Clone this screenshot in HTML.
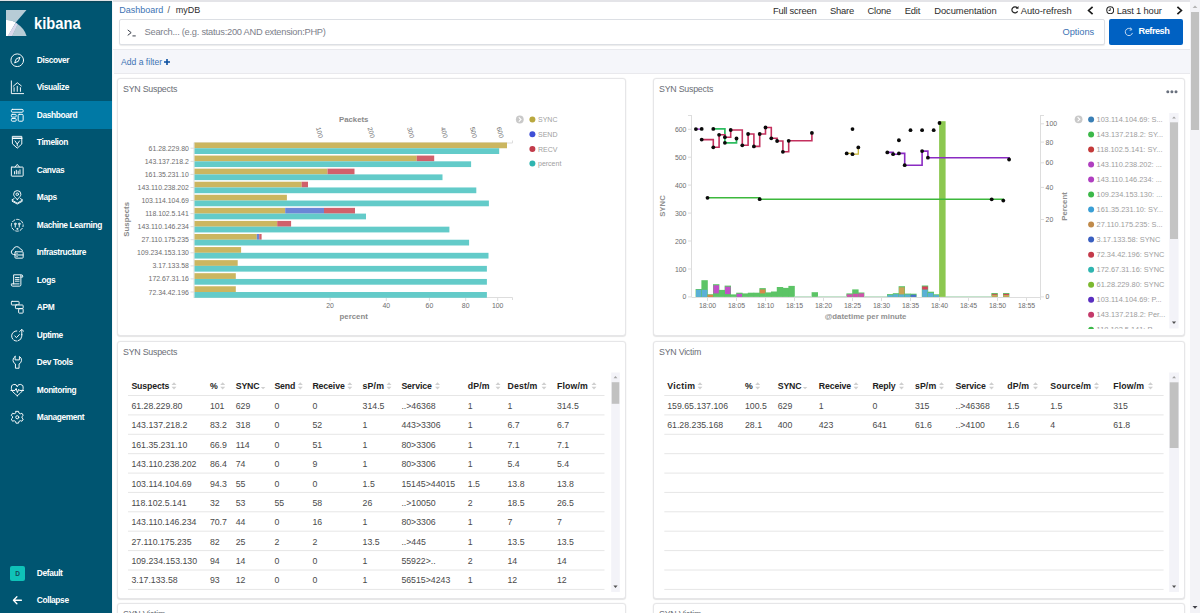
<!DOCTYPE html>
<html>
<head>
<meta charset="utf-8">
<title>Kibana</title>
<style>
*{box-sizing:border-box;margin:0;padding:0}
html,body{width:1200px;height:613px;overflow:hidden;background:#f5f7fa;font-family:"Liberation Sans",sans-serif;color:#2d2d2d}
body{position:relative}
.abs{position:absolute}
/* sidebar */
#side{position:absolute;left:0;top:0;width:112px;height:613px;background:#005571;overflow:hidden}
#sidetop{position:absolute;left:0;top:0;width:112px;height:3px;background:linear-gradient(#dfe3e6 0,#dfe3e6 1px,#0a4559 1px,#03506a 3px)}
#logo{position:absolute;left:6px;top:9.9px;width:20.7px;height:26.1px}
#brand{position:absolute;left:34px;top:13.4px;color:#fff;font-size:16.2px;font-weight:bold;white-space:nowrap;line-height:20px}
#brand span{display:inline-block;transform:scaleX(0.91);transform-origin:0 0}
#side .item{position:absolute;left:0;width:112px;height:27.5px;color:#fff;font-size:8.4px;font-weight:bold;letter-spacing:-0.38px}
#side .item span{position:absolute;left:36.8px;top:8.6px;line-height:10px;white-space:nowrap}
#side .item svg{position:absolute;left:9.5px;top:6.5px;width:14.5px;height:14.5px;fill:none;stroke:#fff;stroke-width:1.05;stroke-linecap:round;stroke-linejoin:round}
#side .item.on{background:#0079a5}
#badge{position:absolute;left:10px;top:6.9px;width:15px;height:15px;border-radius:2px;background:#0fc2b8;color:#114a5a;font-size:6.5px;font-weight:bold;text-align:center;line-height:15px;letter-spacing:0}
/* top */
#topline{position:absolute;left:113px;top:0;width:1077px;height:2px;background:#e4e4e8}
#main{position:absolute;left:113px;top:0;width:1077px;height:613px;background:#fff}
#hdr{position:absolute;left:0;top:2px;width:1077px;height:48px;background:#fff;border-bottom:1px solid #e9eaee}
.nav{position:absolute;top:3.2px;line-height:11px;letter-spacing:-0.2px;font-size:9.4px;color:#2d2d2d;white-space:nowrap}
#search{position:absolute;left:6px;top:17px;width:986px;height:26px;border:1px solid #dcdfe4;border-radius:2px;background:#fff;box-shadow:0 1px 1px rgba(0,0,0,.08)}
#refresh{position:absolute;left:996px;top:17px;width:74px;height:25.5px;background:#0061c2;border-radius:2px;color:#fff;font-size:9.2px;font-weight:bold}
#filter{position:absolute;left:1px;top:50px;width:1076px;height:24px;background:#f5f6fa;border-bottom:1px solid #e9e9ed}
.panel{position:absolute;background:#fff;border:1px solid #e6e6e8;border-radius:3px;box-shadow:0 1px 1px rgba(0,0,0,.09), 0 0 0 0.5px rgba(0,0,0,.03)}
.ptitle{position:absolute;left:5px;top:4.8px;line-height:11px;font-size:8.8px;letter-spacing:-0.22px;color:#6a6d75;white-space:nowrap}
/* scrollbar */
#sb{position:absolute;left:1190px;top:0;width:10px;height:613px;background:#f3f3f7}
#sb .thumb{position:absolute;left:1px;top:12px;width:8px;height:118px;background:#c1c1c1}
</style>
</head>
<body>
<div id="main">
  <div id="hdr">
    <div class="nav" style="left:6.2px;top:3.4px;color:#3d73b4;font-size:9px;letter-spacing:0">Dashboard</div>
    <div class="nav" style="left:54.5px;top:3.4px;font-size:9px;color:#555">/</div>
    <div class="nav" style="left:62.8px;top:3.4px;font-size:9px;letter-spacing:0">myDB</div>
    <div class="nav" style="left:659.9px">Full screen</div>
    <div class="nav" style="left:717px">Share</div>
    <div class="nav" style="left:754.5px">Clone</div>
    <div class="nav" style="left:791.8px">Edit</div>
    <div class="nav" style="left:821.2px;letter-spacing:-0.05px">Documentation</div>
    <svg class="abs" style="left:898px;top:4px;width:8px;height:8px" viewBox="0 0 16 16"><path d="M13.2 10.5 A6 6 0 1 1 12.5 4" fill="none" stroke="#222" stroke-width="2.4"/><path d="M9.5 5.5 H15 V0 Z" fill="#222"/></svg>
    <div class="nav" style="left:907.7px;letter-spacing:-0.05px">Auto-refresh</div>
    <svg class="abs" style="left:973.5px;top:4px;width:7px;height:9px" viewBox="0 0 7 9"><path d="M5.6 0.8 L1.6 4.5 L5.6 8.2" fill="none" stroke="#1a1a1a" stroke-width="1.7"/></svg>
    <svg class="abs" style="left:993px;top:4px;width:8.4px;height:8.4px" viewBox="0 0 16 16"><circle cx="8" cy="8" r="6.6" fill="none" stroke="#222" stroke-width="2"/><path d="M8 4 V8.5 H5" fill="none" stroke="#222" stroke-width="1.8"/></svg>
    <div class="nav" style="left:1003.7px;letter-spacing:-0.18px">Last 1 hour</div>
    <svg class="abs" style="left:1062.5px;top:4px;width:7px;height:9px" viewBox="0 0 7 9"><path d="M1.4 0.8 L5.4 4.5 L1.4 8.2" fill="none" stroke="#1a1a1a" stroke-width="1.7"/></svg>
    <div id="search">
      <svg class="abs" style="left:6.6px;top:8.8px;width:10px;height:8.2px" viewBox="0 0 11 9"><path d="M0.8 1 L4.6 4 L0.8 7" fill="none" stroke="#3a3f4a" stroke-width="1.1"/><path d="M6 7.6 H9.6" stroke="#3a3f4a" stroke-width="1.1"/></svg>
      <div class="abs" style="left:24.6px;top:6.6px;font-size:9.3px;line-height:11px;color:#7c808a;letter-spacing:-0.26px;white-space:nowrap">Search... (e.g. status:200 AND extension:PHP)</div>
      <div class="abs" style="left:942.5px;top:6.6px;font-size:9.3px;line-height:11px;color:#3d73b4;letter-spacing:-0.05px;white-space:nowrap">Options</div>
    </div>
    <div id="refresh">
      <svg class="abs" style="left:14.5px;top:8px;width:10px;height:10px" viewBox="0 0 16 16"><path d="M13.5 9.5 A5.8 5.8 0 1 1 11.5 3.4" fill="none" stroke="#cfe0f3" stroke-width="1.5"/><path d="M10.5 1 L12.5 4.4 L9 5.2" fill="none" stroke="#cfe0f3" stroke-width="1.4"/></svg>
      <div class="abs" style="left:29.6px;top:7.2px;line-height:11px;letter-spacing:-0.5px">Refresh</div>
    </div>
  </div>
  <div id="filter"><div class="abs" style="left:7px;top:7px;font-size:8.6px;line-height:10px;color:#3d73b4;letter-spacing:0;white-space:nowrap">Add a filter</div><svg class="abs" style="left:49.6px;top:8.6px;width:6px;height:6px" viewBox="0 0 6 6"><path d="M3 0 V6 M0 3 H6" stroke="#0a4fa0" stroke-width="1.6"/></svg></div>
  <div class="panel" id="p1" style="left:4px;top:78px;width:509px;height:258px"><div class="ptitle">SYN Suspects</div></div>
  <div class="panel" id="p2" style="left:540px;top:78px;width:532px;height:258px"><div class="ptitle">SYN Suspects</div></div>
  <div class="panel" id="p3" style="left:4px;top:341px;width:509px;height:258px"><div class="ptitle">SYN Suspects</div></div>
  <div class="panel" id="p4" style="left:540px;top:341px;width:532px;height:258px"><div class="ptitle">SYN Victim</div></div>
  <div class="panel" id="p5" style="left:4px;top:603px;width:509px;height:40px"><div class="ptitle">SYN Victim</div></div>
  <div class="panel" id="p6" style="left:540px;top:603px;width:532px;height:40px"><div class="ptitle">SYN Victim</div></div>
</div>
<svg class="abs" style="left:0;top:0" width="1200" height="613" font-family="Liberation Sans, sans-serif">
<g stroke="#ddd" stroke-width="1" fill="none">
<path d="M194 142.5 V298 M194 143 H512.5 V140.5 M194 297.5 H512.5 V300"/>
<path d="M319.1 143 V146"/>
<path d="M370.7 143 V146"/>
<path d="M410.3 143 V146"/>
<path d="M443.7 143 V146"/>
<path d="M473.1 143 V146"/>
<path d="M499.7 143 V146"/>
<path d="M330.1 297.5 V301"/>
<path d="M386.3 297.5 V301"/>
<path d="M429.4 297.5 V301"/>
<path d="M465.7 297.5 V301"/>
<path d="M497.7 297.5 V301"/>
<path d="M190.5 148.2 H194"/>
<path d="M190.5 161.3 H194"/>
<path d="M190.5 174.4 H194"/>
<path d="M190.5 187.5 H194"/>
<path d="M190.5 200.5 H194"/>
<path d="M190.5 213.6 H194"/>
<path d="M190.5 226.7 H194"/>
<path d="M190.5 239.7 H194"/>
<path d="M190.5 252.8 H194"/>
<path d="M190.5 265.9 H194"/>
<path d="M190.5 278.9 H194"/>
<path d="M190.5 292.0 H194"/>
</g>
<rect x="194.5" y="142.50" width="312.5" height="5.75" fill="#cbb660"/>
<rect x="194.5" y="148.25" width="304.7" height="5.75" fill="#63cbc9"/>
<rect x="194.5" y="155.57" width="222.2" height="5.75" fill="#cbb660"/>
<rect x="416.7" y="155.57" width="17.5" height="5.75" fill="#d1606b"/>
<rect x="194.5" y="161.32" width="276.6" height="5.75" fill="#63cbc9"/>
<rect x="194.5" y="168.64" width="133.0" height="5.75" fill="#cbb660"/>
<rect x="327.5" y="168.64" width="27.0" height="5.75" fill="#d1606b"/>
<rect x="194.5" y="174.39" width="248.0" height="5.75" fill="#63cbc9"/>
<rect x="194.5" y="181.71" width="107.2" height="5.75" fill="#cbb660"/>
<rect x="301.7" y="181.71" width="6.3" height="5.75" fill="#d1606b"/>
<rect x="194.5" y="187.46" width="281.8" height="5.75" fill="#63cbc9"/>
<rect x="194.5" y="194.78" width="92.4" height="5.75" fill="#cbb660"/>
<rect x="194.5" y="200.53" width="294.4" height="5.75" fill="#63cbc9"/>
<rect x="194.5" y="207.85" width="90.7" height="5.75" fill="#cbb660"/>
<rect x="285.2" y="207.85" width="38.8" height="5.75" fill="#6b86d6"/>
<rect x="324.0" y="207.85" width="31.0" height="5.75" fill="#d1606b"/>
<rect x="194.5" y="213.60" width="171.5" height="5.75" fill="#63cbc9"/>
<rect x="194.5" y="220.92" width="82.7" height="5.75" fill="#cbb660"/>
<rect x="277.2" y="220.92" width="13.9" height="5.75" fill="#d1606b"/>
<rect x="194.5" y="226.67" width="254.9" height="5.75" fill="#63cbc9"/>
<rect x="194.5" y="233.99" width="62.3" height="5.75" fill="#cbb660"/>
<rect x="256.8" y="233.99" width="2.4" height="5.75" fill="#6b86d6"/>
<rect x="259.2" y="233.99" width="2.4" height="5.75" fill="#d1606b"/>
<rect x="194.5" y="239.74" width="274.6" height="5.75" fill="#63cbc9"/>
<rect x="194.5" y="247.06" width="46.6" height="5.75" fill="#cbb660"/>
<rect x="194.5" y="252.81" width="294.0" height="5.75" fill="#63cbc9"/>
<rect x="194.5" y="260.13" width="43.2" height="5.75" fill="#cbb660"/>
<rect x="194.5" y="265.88" width="292.4" height="5.75" fill="#63cbc9"/>
<rect x="194.5" y="273.20" width="41.3" height="5.75" fill="#cbb660"/>
<rect x="194.5" y="278.95" width="292.4" height="5.75" fill="#63cbc9"/>
<rect x="194.5" y="286.27" width="41.3" height="5.75" fill="#cbb660"/>
<rect x="194.5" y="292.02" width="292.4" height="5.75" fill="#63cbc9"/>
<g font-size="6.9" fill="#6d6d6d" text-anchor="end">
<text x="188.8" y="150.8">61.28.229.80</text>
<text x="188.8" y="163.8">143.137.218.2</text>
<text x="188.8" y="176.9">161.35.231.10</text>
<text x="188.8" y="190.0">143.110.238.202</text>
<text x="188.8" y="203.0">103.114.104.69</text>
<text x="188.8" y="216.1">118.102.5.141</text>
<text x="188.8" y="229.2">143.110.146.234</text>
<text x="188.8" y="242.2">27.110.175.235</text>
<text x="188.8" y="255.3">109.234.153.130</text>
<text x="188.8" y="268.4">3.17.133.58</text>
<text x="188.8" y="281.4">172.67.31.16</text>
<text x="188.8" y="294.5">72.34.42.196</text>
</g>
<g font-size="6.9" fill="#6d6d6d" text-anchor="middle">
<text x="330.1" y="308.2">20</text>
<text x="386.3" y="308.2">40</text>
<text x="429.4" y="308.2">60</text>
<text x="465.7" y="308.2">80</text>
<text x="497.7" y="308.2">100</text>
</g>
<g font-size="6.6" fill="#6d6d6d">
<text transform="translate(315.9 127.8) rotate(75)">100</text>
<text transform="translate(367.5 127.8) rotate(75)">200</text>
<text transform="translate(407.1 127.8) rotate(75)">300</text>
<text transform="translate(440.5 127.8) rotate(75)">400</text>
<text transform="translate(469.9 127.8) rotate(75)">500</text>
<text transform="translate(496.5 127.8) rotate(75)">600</text>
</g>
<g font-size="7.8" font-weight="bold" fill="#8a8a8a" text-anchor="middle">
<text x="353.7" y="122">Packets</text>
<text x="353.7" y="319.4">percent</text>
<text transform="translate(129 219.3) rotate(-90)">Suspects</text>
</g>
<circle cx="519.8" cy="119.5" r="3.9" fill="#c9c9c9"/><path d="M518.8 117.4 L521 119.5 L518.8 121.6" stroke="#fff" stroke-width="1.1" fill="none"/>
<circle cx="532.4" cy="119.5" r="3" fill="#b9a83f"/><text x="538" y="122.1" font-size="7" fill="#a0a0a0">SYNC</text>
<circle cx="532.4" cy="134.2" r="3" fill="#3f4fd6"/><text x="538" y="136.8" font-size="7" fill="#a0a0a0">SEND</text>
<circle cx="532.4" cy="148.9" r="3" fill="#c23b4a"/><text x="538" y="151.5" font-size="7" fill="#a0a0a0">RECV</text>
<circle cx="532.4" cy="163.6" r="3" fill="#2fb5b0"/><text x="538" y="166.2" font-size="7" fill="#a0a0a0">percent</text>
</svg>
<svg class="abs" style="left:0;top:0" width="1200" height="613" font-family="Liberation Sans, sans-serif">
<defs><clipPath id="lgclip"><rect x="1070" y="112" width="100" height="217"/></clipPath></defs>
<g stroke="#ddd" stroke-width="1" fill="none">
<path d="M691.5 115 V297 M688 115.5 H691.5 M691.5 297.5 H1040.5 M1040.5 115 V300 M1040.5 115.5 H1044"/>
<path d="M688 296.9 H691.5"/>
<path d="M688 269.0 H691.5"/>
<path d="M688 241.0 H691.5"/>
<path d="M688 213.1 H691.5"/>
<path d="M688 185.1 H691.5"/>
<path d="M688 157.2 H691.5"/>
<path d="M688 129.3 H691.5"/>
<path d="M707.5 297.5 V301"/>
<path d="M736.5 297.5 V301"/>
<path d="M765.5 297.5 V301"/>
<path d="M794.5 297.5 V301"/>
<path d="M823.5 297.5 V301"/>
<path d="M852.5 297.5 V301"/>
<path d="M881.5 297.5 V301"/>
<path d="M910.5 297.5 V301"/>
<path d="M939.5 297.5 V301"/>
<path d="M968.5 297.5 V301"/>
<path d="M997.5 297.5 V301"/>
<path d="M1026.5 297.5 V301"/>
<path d="M1040.5 296.9 H1044"/>
<path d="M1040.5 219.5 H1044"/>
<path d="M1040.5 187.4 H1044"/>
<path d="M1040.5 162.8 H1044"/>
<path d="M1040.5 142.1 H1044"/>
<path d="M1040.5 123.8 H1044"/>
</g>
<rect x="695.6" y="289.0" width="6.4" height="7.9" fill="#5cc466"/>
<rect x="696.00" y="289.8" width="5.60" height="7.1" fill="#5bb0d6"/>
<rect x="701.4" y="280.2" width="6.4" height="16.7" fill="#5cc466"/>
<rect x="701.80" y="289.8" width="5.60" height="7.1" fill="#5bb0d6"/>
<rect x="707.2" y="294.3" width="6.4" height="2.6" fill="#5cc466"/>
<rect x="707.60" y="294.8" width="5.60" height="2.1" fill="#d8884a"/>
<rect x="713.0" y="284.2" width="6.4" height="12.7" fill="#5cc466"/>
<rect x="713.40" y="285.3" width="5.60" height="8.1" fill="#c24fc8"/>
<rect x="718.8" y="289.9" width="6.4" height="7.0" fill="#5cc466"/>
<rect x="724.6" y="285.6" width="6.4" height="11.3" fill="#5cc466"/>
<rect x="725.00" y="286.7" width="5.60" height="7.4" fill="#c24fc8"/>
<rect x="730.4" y="294.4" width="6.4" height="2.5" fill="#5cc466"/>
<rect x="736.2" y="292.7" width="6.4" height="4.2" fill="#5cc466"/>
<rect x="736.60" y="293.8" width="5.60" height="3.1" fill="#c24fc8"/>
<rect x="742.0" y="293.4" width="6.4" height="3.5" fill="#5cc466"/>
<rect x="747.8" y="292.7" width="6.4" height="4.2" fill="#5cc466"/>
<rect x="753.6" y="292.7" width="6.4" height="4.2" fill="#5cc466"/>
<rect x="759.4" y="288.1" width="6.4" height="8.8" fill="#5cc466"/>
<rect x="759.80" y="289.5" width="5.60" height="3.9" fill="#d8884a"/>
<rect x="765.2" y="292.4" width="6.4" height="4.5" fill="#5cc466"/>
<rect x="771.0" y="291.5" width="6.4" height="5.4" fill="#5cc466"/>
<rect x="776.8" y="287.0" width="6.4" height="9.9" fill="#5cc466"/>
<rect x="782.6" y="287.9" width="6.4" height="9.0" fill="#5cc466"/>
<rect x="788.4" y="285.9" width="6.4" height="11.0" fill="#5cc466"/>
<rect x="811.6" y="292.2" width="6.4" height="4.7" fill="#5cc466"/>
<rect x="846.4" y="293.4" width="6.4" height="3.5" fill="#5cc466"/>
<rect x="846.80" y="294.4" width="5.60" height="2.5" fill="#d052ad"/>
<rect x="852.2" y="289.4" width="6.4" height="7.5" fill="#5cc466"/>
<rect x="852.60" y="293.8" width="5.60" height="3.1" fill="#d052ad"/>
<rect x="858.0" y="292.5" width="6.4" height="4.4" fill="#5cc466"/>
<rect x="858.40" y="293.4" width="5.60" height="3.5" fill="#d052ad"/>
<rect x="887.0" y="294.1" width="6.4" height="2.8" fill="#5cc466"/>
<rect x="887.40" y="295.1" width="5.60" height="1.8" fill="#5bb0d6"/>
<rect x="892.8" y="293.2" width="6.4" height="3.7" fill="#5cc466"/>
<rect x="893.20" y="294.2" width="5.60" height="2.7" fill="#5bb0d6"/>
<rect x="898.6" y="286.2" width="6.4" height="10.7" fill="#5cc466"/>
<rect x="899.00" y="294.3" width="5.60" height="2.6" fill="#5bb0d6"/>
<rect x="899.00" y="287.3" width="5.60" height="7.0" fill="#c9a457"/>
<rect x="904.4" y="293.6" width="6.4" height="3.3" fill="#5cc466"/>
<rect x="904.80" y="294.5" width="5.60" height="2.4" fill="#5bb0d6"/>
<rect x="910.2" y="293.7" width="6.4" height="3.2" fill="#5cc466"/>
<rect x="910.60" y="294.7" width="5.60" height="2.2" fill="#4a6fd0"/>
<rect x="921.8" y="285.5" width="6.4" height="11.4" fill="#5cc466"/>
<rect x="922.20" y="289.5" width="5.60" height="7.4" fill="#5bb0d6"/>
<rect x="922.20" y="286.5" width="5.60" height="3.0" fill="#d8405a"/>
<rect x="927.6" y="291.7" width="6.4" height="5.2" fill="#5cc466"/>
<rect x="928.00" y="292.9" width="5.60" height="4.0" fill="#5bb0d6"/>
<rect x="933.4" y="294.3" width="6.4" height="2.6" fill="#5cc466"/>
<rect x="933.80" y="295.1" width="5.60" height="1.8" fill="#5bb0d6"/>
<rect x="991.4" y="293.0" width="6.4" height="3.9" fill="#5cc466"/>
<rect x="991.80" y="294.7" width="5.60" height="2.2" fill="#c9a457"/>
<rect x="991.80" y="293.9" width="5.60" height="0.8" fill="#d8405a"/>
<rect x="1003.0" y="293.0" width="6.4" height="3.9" fill="#5cc466"/>
<rect x="1003.40" y="294.9" width="5.60" height="2.0" fill="#c9a457"/>
<rect x="1003.40" y="293.9" width="5.60" height="1.0" fill="#d8405a"/>
<path d="M794.5 296.6 H811.9 M817.7 296.6 H846.7 M864.1 296.6 H887.3 M945.3 296.6 H991.7" stroke="#b5dcc0" stroke-width="0.9"/>
<rect x="939.1" y="121.2" width="6.5" height="175.7" fill="#8cc850"/>
<path d="M707.5 197.8 H759.7 V199.2 H991.7 V199.3 H1003.3 V200.6" fill="none" stroke="#3cb83c" stroke-width="1.6"/>
<path d="M713.3 128.9 H724.9 V142.8 H736.5 V138.5" fill="none" stroke="#2ebd60" stroke-width="1.7"/>
<path d="M701.7 139.6 H713.3 V147.3 H719.1 V134.8 H724.9 V137.2 H730.7 V130 H742.3 V145.3 H748.1 V134 H753.9 V146.4 H759.7 V134 H765.5 V127.5 H771.3 V138.3 H777.1 V141 H782.9 V151.8 H788.7 V140.8 H811.9 V132.9" fill="none" stroke="#c4305e" stroke-width="1.6"/>
<path d="M695.9 129.1 H701.7 V128.9" fill="none" stroke="#8a2bc2" stroke-width="1.2"/>
<path d="M846.7 153.4 H852.5 V154.2 H858.3 V147.4" fill="none" stroke="#c9b62e" stroke-width="1.2"/>
<path d="M887.3 152.4 H893.1 V154.2 H898.9 V153.4 H904.7 V165.2 H922.1 V151.1 H927.9 V157.7 H1009.1 V159.5" fill="none" stroke="#8a2bc2" stroke-width="1.6"/>
<circle cx="707.5" cy="197.8" r="1.9" fill="#0a0a0a"/>
<circle cx="759.7" cy="199.2" r="1.9" fill="#0a0a0a"/>
<circle cx="991.7" cy="199.3" r="1.9" fill="#0a0a0a"/>
<circle cx="1003.3" cy="200.6" r="1.9" fill="#0a0a0a"/>
<circle cx="713.3" cy="128.9" r="1.9" fill="#0a0a0a"/>
<circle cx="724.9" cy="142.8" r="1.9" fill="#0a0a0a"/>
<circle cx="736.5" cy="138.5" r="1.9" fill="#0a0a0a"/>
<circle cx="701.7" cy="139.6" r="1.9" fill="#0a0a0a"/>
<circle cx="713.3" cy="147.3" r="1.9" fill="#0a0a0a"/>
<circle cx="719.1" cy="134.8" r="1.9" fill="#0a0a0a"/>
<circle cx="724.9" cy="137.2" r="1.9" fill="#0a0a0a"/>
<circle cx="730.7" cy="130" r="1.9" fill="#0a0a0a"/>
<circle cx="742.3" cy="145.3" r="1.9" fill="#0a0a0a"/>
<circle cx="748.1" cy="134" r="1.9" fill="#0a0a0a"/>
<circle cx="753.9" cy="146.4" r="1.9" fill="#0a0a0a"/>
<circle cx="759.7" cy="134" r="1.9" fill="#0a0a0a"/>
<circle cx="765.5" cy="127.5" r="1.9" fill="#0a0a0a"/>
<circle cx="771.3" cy="138.3" r="1.9" fill="#0a0a0a"/>
<circle cx="777.1" cy="141" r="1.9" fill="#0a0a0a"/>
<circle cx="782.9" cy="151.8" r="1.9" fill="#0a0a0a"/>
<circle cx="788.7" cy="140.8" r="1.9" fill="#0a0a0a"/>
<circle cx="811.9" cy="132.9" r="1.9" fill="#0a0a0a"/>
<circle cx="695.9" cy="129.1" r="1.9" fill="#0a0a0a"/>
<circle cx="701.7" cy="128.9" r="1.9" fill="#0a0a0a"/>
<circle cx="846.7" cy="153.4" r="1.9" fill="#0a0a0a"/>
<circle cx="852.5" cy="154.2" r="1.9" fill="#0a0a0a"/>
<circle cx="858.3" cy="147.4" r="1.9" fill="#0a0a0a"/>
<circle cx="887.3" cy="152.4" r="1.9" fill="#0a0a0a"/>
<circle cx="893.1" cy="154.2" r="1.9" fill="#0a0a0a"/>
<circle cx="898.9" cy="153.4" r="1.9" fill="#0a0a0a"/>
<circle cx="904.7" cy="165.2" r="1.9" fill="#0a0a0a"/>
<circle cx="922.1" cy="151.1" r="1.9" fill="#0a0a0a"/>
<circle cx="927.9" cy="157.7" r="1.9" fill="#0a0a0a"/>
<circle cx="1009.1" cy="159.5" r="1.9" fill="#0a0a0a"/>
<circle cx="852.5" cy="129.1" r="1.9" fill="#0a0a0a"/>
<circle cx="898.9" cy="140.25" r="1.9" fill="#0a0a0a"/>
<circle cx="910.5" cy="130.2" r="1.9" fill="#0a0a0a"/>
<circle cx="922.1" cy="130.2" r="1.9" fill="#0a0a0a"/>
<circle cx="933.7" cy="130.2" r="1.9" fill="#0a0a0a"/>
<circle cx="939.5" cy="123" r="1.9" fill="#0a0a0a"/>
<g font-size="6.9" fill="#6d6d6d" text-anchor="end">
<text x="686.4" y="299.4">0</text>
<text x="686.4" y="271.5">100</text>
<text x="686.4" y="243.5">200</text>
<text x="686.4" y="215.6">300</text>
<text x="686.4" y="187.6">400</text>
<text x="686.4" y="159.7">500</text>
<text x="686.4" y="131.8">600</text>
</g>
<g font-size="6.9" fill="#6d6d6d" text-anchor="start">
<text x="1045.6" y="299.4">0</text>
<text x="1045.6" y="222.0">20</text>
<text x="1045.6" y="189.9">40</text>
<text x="1045.6" y="165.3">60</text>
<text x="1045.6" y="144.6">80</text>
<text x="1045.6" y="126.3">100</text>
</g>
<g font-size="6.9" fill="#6d6d6d" text-anchor="middle">
<text x="707.5" y="308">18:00</text>
<text x="736.5" y="308">18:05</text>
<text x="765.5" y="308">18:10</text>
<text x="794.5" y="308">18:15</text>
<text x="823.5" y="308">18:20</text>
<text x="852.5" y="308">18:25</text>
<text x="881.5" y="308">18:30</text>
<text x="910.5" y="308">18:35</text>
<text x="939.5" y="308">18:40</text>
<text x="968.5" y="308">18:45</text>
<text x="997.5" y="308">18:50</text>
<text x="1026.5" y="308">18:55</text>
</g>
<g font-size="7.8" font-weight="bold" fill="#909090" text-anchor="middle">
<text x="865.6" y="318.8">@datetime per minute</text>
<text transform="translate(665.4 206) rotate(-90)">SYNC</text>
<text transform="translate(1067 206.5) rotate(-90)">Percent</text>
</g>
<circle cx="1078.6" cy="119.3" r="3.9" fill="#c9c9c9"/><path d="M1077.6 117.2 L1079.8 119.3 L1077.6 121.4" stroke="#fff" stroke-width="1.1" fill="none"/>
<g clip-path="url(#lgclip)">
<circle cx="1091.1" cy="119.4" r="3" fill="#3a7fb5"/><text x="1096.6" y="122.0" font-size="7.4" fill="#9d9d9d">103.114.104.69: S...</text>
<circle cx="1091.1" cy="134.4" r="3" fill="#3cb849"/><text x="1096.6" y="137.0" font-size="7.4" fill="#9d9d9d">143.137.218.2: SY...</text>
<circle cx="1091.1" cy="149.5" r="3" fill="#c43a3a"/><text x="1096.6" y="152.1" font-size="7.4" fill="#9d9d9d">118.102.5.141: SY...</text>
<circle cx="1091.1" cy="164.5" r="3" fill="#b03fc0"/><text x="1096.6" y="167.1" font-size="7.4" fill="#9d9d9d">143.110.238.202: ...</text>
<circle cx="1091.1" cy="179.5" r="3" fill="#b03fc0"/><text x="1096.6" y="182.1" font-size="7.4" fill="#9d9d9d">143.110.146.234: ...</text>
<circle cx="1091.1" cy="194.6" r="3" fill="#3cb849"/><text x="1096.6" y="197.2" font-size="7.4" fill="#9d9d9d">109.234.153.130: ...</text>
<circle cx="1091.1" cy="209.6" r="3" fill="#3a9fd5"/><text x="1096.6" y="212.2" font-size="7.4" fill="#9d9d9d">161.35.231.10: SY...</text>
<circle cx="1091.1" cy="224.6" r="3" fill="#c08a4a"/><text x="1096.6" y="227.2" font-size="7.4" fill="#9d9d9d">27.110.175.235: S...</text>
<circle cx="1091.1" cy="239.6" r="3" fill="#3a5fc0"/><text x="1096.6" y="242.2" font-size="7.4" fill="#9d9d9d">3.17.133.58: SYNC</text>
<circle cx="1091.1" cy="254.7" r="3" fill="#c43a4a"/><text x="1096.6" y="257.3" font-size="7.4" fill="#9d9d9d">72.34.42.196: SYNC</text>
<circle cx="1091.1" cy="269.7" r="3" fill="#2fb5b0"/><text x="1096.6" y="272.3" font-size="7.4" fill="#9d9d9d">172.67.31.16: SYNC</text>
<circle cx="1091.1" cy="284.7" r="3" fill="#7cb82f"/><text x="1096.6" y="287.3" font-size="7.4" fill="#9d9d9d">61.28.229.80: SYNC</text>
<circle cx="1091.1" cy="299.8" r="3" fill="#5a2fc0"/><text x="1096.6" y="302.4" font-size="7.4" fill="#9d9d9d">103.114.104.69: P...</text>
<circle cx="1091.1" cy="314.8" r="3" fill="#c43a6a"/><text x="1096.6" y="317.4" font-size="7.4" fill="#9d9d9d">143.137.218.2: Per...</text>
<circle cx="1091.1" cy="329.8" r="3" fill="#3cb849"/><text x="1096.6" y="332.4" font-size="7.4" fill="#9d9d9d">118.102.5.141: P...</text>
</g>
<rect x="1169.3" y="113" width="9.3" height="215.5" fill="#f3f3f8"/><rect x="1170" y="122.3" width="8" height="116.7" fill="#c4c4c4"/>
<path d="M1172.1 118.6 L1174 116.4 L1175.9 118.6 Z" fill="#a3a3a3"/><path d="M1171.9 321.6 L1174 324 L1176.1 321.6 Z" fill="#505050"/>
<g fill="#69707d"><circle cx="1167.8" cy="91.7" r="1.5"/><circle cx="1171.9" cy="91.7" r="1.5"/><circle cx="1176" cy="91.7" r="1.5"/></g>
</svg>
<svg class="abs" style="left:0;top:0" width="1200" height="613" font-family="Liberation Sans, sans-serif">
<g stroke="#e6e6e6" stroke-width="1">
<path d="M128 395.5 H604.5"/>
<path d="M128 414.9 H604.5"/>
<path d="M128 434.3 H604.5"/>
<path d="M128 453.7 H604.5"/>
<path d="M128 473.1 H604.5"/>
<path d="M128 492.4 H604.5"/>
<path d="M128 511.8 H604.5"/>
<path d="M128 531.2 H604.5"/>
<path d="M128 550.6 H604.5"/>
<path d="M128 570.0 H604.5"/>
<path d="M128 589.4 H604.5"/>
</g>
<g font-size="8.75" font-weight="bold" fill="#222" letter-spacing="-0.12">
<text x="131.4" y="389.4" letter-spacing="-0.12">Suspects</text>
<text x="209.9" y="389.4" letter-spacing="-0.12">%</text>
<text x="235.7" y="389.4" letter-spacing="-0.12">SYNC</text>
<text x="274.4" y="389.4" letter-spacing="-0.12">Send</text>
<text x="312.4" y="389.4" letter-spacing="-0.12">Receive</text>
<text x="362.6" y="389.4" letter-spacing="0.14">sP/m</text>
<text x="401.4" y="389.4" letter-spacing="-0.12">Service</text>
<text x="467.8" y="389.4" letter-spacing="0.14">dP/m</text>
<text x="507.5" y="389.4" letter-spacing="0.14">Dest/m</text>
<text x="556.9" y="389.4" letter-spacing="0.14">Flow/m</text>
</g>
<path d="M171.5 385.0 L174.0 382.3 L176.5 385.0 Z" fill="#cfcfcf"/><path d="M171.5 386.8 L174.0 389.5 L176.5 386.8 Z" fill="#cfcfcf"/>
<path d="M220.2 385.0 L222.7 382.3 L225.2 385.0 Z" fill="#cfcfcf"/><path d="M220.2 386.8 L222.7 389.5 L225.2 386.8 Z" fill="#cfcfcf"/>
<path d="M260.8 386.9 L263.1 389.3 L265.4 386.9 Z" fill="#cfcfcf"/>
<path d="M297.8 385.0 L300.3 382.3 L302.8 385.0 Z" fill="#cfcfcf"/><path d="M297.8 386.8 L300.3 389.5 L302.8 386.8 Z" fill="#cfcfcf"/>
<path d="M347.3 385.0 L349.8 382.3 L352.3 385.0 Z" fill="#cfcfcf"/><path d="M347.3 386.8 L349.8 389.5 L352.3 386.8 Z" fill="#cfcfcf"/>
<path d="M386.5 385.0 L389.0 382.3 L391.5 385.0 Z" fill="#cfcfcf"/><path d="M386.5 386.8 L389.0 389.5 L391.5 386.8 Z" fill="#cfcfcf"/>
<path d="M435.0 385.0 L437.5 382.3 L440.0 385.0 Z" fill="#cfcfcf"/><path d="M435.0 386.8 L437.5 389.5 L440.0 386.8 Z" fill="#cfcfcf"/>
<path d="M495.5 385.0 L498.0 382.3 L500.5 385.0 Z" fill="#cfcfcf"/><path d="M495.5 386.8 L498.0 389.5 L500.5 386.8 Z" fill="#cfcfcf"/>
<path d="M541.5 385.0 L544.0 382.3 L546.5 385.0 Z" fill="#cfcfcf"/><path d="M541.5 386.8 L544.0 389.5 L546.5 386.8 Z" fill="#cfcfcf"/>
<path d="M591.5 385.0 L594.0 382.3 L596.5 385.0 Z" fill="#cfcfcf"/><path d="M591.5 386.8 L594.0 389.5 L596.5 386.8 Z" fill="#cfcfcf"/>
<g font-size="8.75" fill="#4a4a4a">
<text x="131.4" y="408.9">61.28.229.80</text>
<text x="209.9" y="408.9">101</text>
<text x="235.7" y="408.9">629</text>
<text x="274.4" y="408.9">0</text>
<text x="312.4" y="408.9">0</text>
<text x="362.6" y="408.9">314.5</text>
<text x="401.4" y="408.9">..&gt;46368</text>
<text x="467.8" y="408.9">1</text>
<text x="507.5" y="408.9">1</text>
<text x="556.9" y="408.9">314.5</text>
<text x="131.4" y="428.3">143.137.218.2</text>
<text x="209.9" y="428.3">83.2</text>
<text x="235.7" y="428.3">318</text>
<text x="274.4" y="428.3">0</text>
<text x="312.4" y="428.3">52</text>
<text x="362.6" y="428.3">1</text>
<text x="401.4" y="428.3">443&gt;3306</text>
<text x="467.8" y="428.3">1</text>
<text x="507.5" y="428.3">6.7</text>
<text x="556.9" y="428.3">6.7</text>
<text x="131.4" y="447.7">161.35.231.10</text>
<text x="209.9" y="447.7">66.9</text>
<text x="235.7" y="447.7">114</text>
<text x="274.4" y="447.7">0</text>
<text x="312.4" y="447.7">51</text>
<text x="362.6" y="447.7">1</text>
<text x="401.4" y="447.7">80&gt;3306</text>
<text x="467.8" y="447.7">1</text>
<text x="507.5" y="447.7">7.1</text>
<text x="556.9" y="447.7">7.1</text>
<text x="131.4" y="467.1">143.110.238.202</text>
<text x="209.9" y="467.1">86.4</text>
<text x="235.7" y="467.1">74</text>
<text x="274.4" y="467.1">0</text>
<text x="312.4" y="467.1">9</text>
<text x="362.6" y="467.1">1</text>
<text x="401.4" y="467.1">80&gt;3306</text>
<text x="467.8" y="467.1">1</text>
<text x="507.5" y="467.1">5.4</text>
<text x="556.9" y="467.1">5.4</text>
<text x="131.4" y="486.5">103.114.104.69</text>
<text x="209.9" y="486.5">94.3</text>
<text x="235.7" y="486.5">55</text>
<text x="274.4" y="486.5">0</text>
<text x="312.4" y="486.5">0</text>
<text x="362.6" y="486.5">1.5</text>
<text x="401.4" y="486.5">15145&gt;44015</text>
<text x="467.8" y="486.5">1.5</text>
<text x="507.5" y="486.5">13.8</text>
<text x="556.9" y="486.5">13.8</text>
<text x="131.4" y="505.8">118.102.5.141</text>
<text x="209.9" y="505.8">32</text>
<text x="235.7" y="505.8">53</text>
<text x="274.4" y="505.8">55</text>
<text x="312.4" y="505.8">58</text>
<text x="362.6" y="505.8">26</text>
<text x="401.4" y="505.8">..&gt;10050</text>
<text x="467.8" y="505.8">2</text>
<text x="507.5" y="505.8">18.5</text>
<text x="556.9" y="505.8">26.5</text>
<text x="131.4" y="525.2">143.110.146.234</text>
<text x="209.9" y="525.2">70.7</text>
<text x="235.7" y="525.2">44</text>
<text x="274.4" y="525.2">0</text>
<text x="312.4" y="525.2">16</text>
<text x="362.6" y="525.2">1</text>
<text x="401.4" y="525.2">80&gt;3306</text>
<text x="467.8" y="525.2">1</text>
<text x="507.5" y="525.2">7</text>
<text x="556.9" y="525.2">7</text>
<text x="131.4" y="544.6">27.110.175.235</text>
<text x="209.9" y="544.6">82</text>
<text x="235.7" y="544.6">25</text>
<text x="274.4" y="544.6">2</text>
<text x="312.4" y="544.6">2</text>
<text x="362.6" y="544.6">13.5</text>
<text x="401.4" y="544.6">..&gt;445</text>
<text x="467.8" y="544.6">1</text>
<text x="507.5" y="544.6">13.5</text>
<text x="556.9" y="544.6">13.5</text>
<text x="131.4" y="564.0">109.234.153.130</text>
<text x="209.9" y="564.0">94</text>
<text x="235.7" y="564.0">14</text>
<text x="274.4" y="564.0">0</text>
<text x="312.4" y="564.0">0</text>
<text x="362.6" y="564.0">1</text>
<text x="401.4" y="564.0">55922&gt;..</text>
<text x="467.8" y="564.0">2</text>
<text x="507.5" y="564.0">14</text>
<text x="556.9" y="564.0">14</text>
<text x="131.4" y="583.4">3.17.133.58</text>
<text x="209.9" y="583.4">93</text>
<text x="235.7" y="583.4">12</text>
<text x="274.4" y="583.4">0</text>
<text x="312.4" y="583.4">0</text>
<text x="362.6" y="583.4">1</text>
<text x="401.4" y="583.4">56515&gt;4243</text>
<text x="467.8" y="583.4">1</text>
<text x="507.5" y="583.4">12</text>
<text x="556.9" y="583.4">12</text>
</g>
<rect x="611.2" y="372.5" width="8.599999999999909" height="219.5" fill="#f3f3f8"/><rect x="611.7" y="382.2" width="7.599999999999909" height="21.600000000000023" fill="#c1c1c1"/>
<path d="M613.6 378.3 L615.5 376 L617.4 378.3 Z" fill="#a3a3a3"/><path d="M613.4 585.6 L615.5 588 L617.6 585.6 Z" fill="#505050"/>
</svg>
<svg class="abs" style="left:0;top:0" width="1200" height="613" font-family="Liberation Sans, sans-serif">
<g stroke="#e6e6e6" stroke-width="1">
<path d="M664.3 395.5 H1163.6"/>
<path d="M664.3 414.9 H1163.6"/>
<path d="M664.3 434.3 H1163.6"/>
<path d="M664.3 453.7 H1163.6"/>
<path d="M664.3 473.1 H1163.6"/>
<path d="M664.3 492.4 H1163.6"/>
<path d="M664.3 511.8 H1163.6"/>
<path d="M664.3 531.2 H1163.6"/>
<path d="M664.3 550.6 H1163.6"/>
<path d="M664.3 570.0 H1163.6"/>
<path d="M664.3 589.4 H1163.6"/>
</g>
<g font-size="8.75" font-weight="bold" fill="#222" letter-spacing="-0.12">
<text x="667.2" y="389.4" letter-spacing="0.35">Victim</text>
<text x="745" y="389.4" letter-spacing="-0.12">%</text>
<text x="777.7" y="389.4" letter-spacing="-0.12">SYNC</text>
<text x="818.7" y="389.4" letter-spacing="-0.12">Receive</text>
<text x="872.4" y="389.4" letter-spacing="-0.12">Reply</text>
<text x="914.9" y="389.4" letter-spacing="0.14">sP/m</text>
<text x="955.5" y="389.4" letter-spacing="-0.12">Service</text>
<text x="1007.3" y="389.4" letter-spacing="0.14">dP/m</text>
<text x="1050.2" y="389.4" letter-spacing="0.14">Source/m</text>
<text x="1113.2" y="389.4" letter-spacing="0.14">Flow/m</text>
</g>
<path d="M697.5 385.0 L700.0 382.3 L702.5 385.0 Z" fill="#cfcfcf"/><path d="M697.5 386.8 L700.0 389.5 L702.5 386.8 Z" fill="#cfcfcf"/>
<path d="M755.2 385.0 L757.7 382.3 L760.2 385.0 Z" fill="#cfcfcf"/><path d="M755.2 386.8 L757.7 389.5 L760.2 386.8 Z" fill="#cfcfcf"/>
<path d="M802.8 386.9 L805.1 389.3 L807.4 386.9 Z" fill="#cfcfcf"/>
<path d="M853.5 385.0 L856.0 382.3 L858.5 385.0 Z" fill="#cfcfcf"/><path d="M853.5 386.8 L856.0 389.5 L858.5 386.8 Z" fill="#cfcfcf"/>
<path d="M899.0 385.0 L901.5 382.3 L904.0 385.0 Z" fill="#cfcfcf"/><path d="M899.0 386.8 L901.5 389.5 L904.0 386.8 Z" fill="#cfcfcf"/>
<path d="M939.0 385.0 L941.5 382.3 L944.0 385.0 Z" fill="#cfcfcf"/><path d="M939.0 386.8 L941.5 389.5 L944.0 386.8 Z" fill="#cfcfcf"/>
<path d="M989.0 385.0 L991.5 382.3 L994.0 385.0 Z" fill="#cfcfcf"/><path d="M989.0 386.8 L991.5 389.5 L994.0 386.8 Z" fill="#cfcfcf"/>
<path d="M1033.0 385.0 L1035.5 382.3 L1038.0 385.0 Z" fill="#cfcfcf"/><path d="M1033.0 386.8 L1035.5 389.5 L1038.0 386.8 Z" fill="#cfcfcf"/>
<path d="M1094.0 385.0 L1096.5 382.3 L1099.0 385.0 Z" fill="#cfcfcf"/><path d="M1094.0 386.8 L1096.5 389.5 L1099.0 386.8 Z" fill="#cfcfcf"/>
<path d="M1148.0 385.0 L1150.5 382.3 L1153.0 385.0 Z" fill="#cfcfcf"/><path d="M1148.0 386.8 L1150.5 389.5 L1153.0 386.8 Z" fill="#cfcfcf"/>
<g font-size="8.75" fill="#4a4a4a">
<text x="667.2" y="408.9">159.65.137.106</text>
<text x="745" y="408.9">100.5</text>
<text x="777.7" y="408.9">629</text>
<text x="818.7" y="408.9">1</text>
<text x="872.4" y="408.9">0</text>
<text x="914.9" y="408.9">315</text>
<text x="955.5" y="408.9">..&gt;46368</text>
<text x="1007.3" y="408.9">1.5</text>
<text x="1050.2" y="408.9">1.5</text>
<text x="1113.2" y="408.9">315</text>
<text x="667.2" y="428.3">61.28.235.168</text>
<text x="745" y="428.3">28.1</text>
<text x="777.7" y="428.3">400</text>
<text x="818.7" y="428.3">423</text>
<text x="872.4" y="428.3">641</text>
<text x="914.9" y="428.3">61.6</text>
<text x="955.5" y="428.3">..&gt;4100</text>
<text x="1007.3" y="428.3">1.6</text>
<text x="1050.2" y="428.3">4</text>
<text x="1113.2" y="428.3">61.8</text>
</g>
<rect x="1169.2" y="372.5" width="9.799999999999955" height="219.5" fill="#f3f3f8"/><rect x="1169.7" y="382.3" width="8.799999999999955" height="65.69999999999999" fill="#c1c1c1"/>
<path d="M1172.2 378.3 L1174.1 376 L1176.0 378.3 Z" fill="#a3a3a3"/><path d="M1172.0 585.6 L1174.1 588 L1176.2 585.6 Z" fill="#505050"/>
</svg>
<div id="topline"></div>
<div id="side">
<div id="sidetop"></div>
<svg id="logo" viewBox="0 0 20.7 26.1"><path d="M0 0 H20.5 L9.8 12.4 Q5.2 9.7 0 10 Z" fill="#b7ccd6"/><path d="M0 10 Q5.2 9.7 9.8 12.4 L2 26.1 H0 Z" fill="#fff"/><path d="M9.8 12.4 L1.6 26.1 H6.4 L12 14.3 Z" fill="#dcd9ec"/><path d="M11.6 14 Q18.6 18.6 20.6 26.1 H6 Z" fill="#b7ccd6"/></svg>
<div id="brand"><span>kibana</span></div>
<div class="item" style="top:46.0px"><svg viewBox="0 0 16 16"><circle cx="8" cy="8" r="7"/><path d="M10.9 5.1 L9.2 9.2 L5.1 10.9 L6.8 6.8 Z"/></svg><span>Discover</span></div>
<div class="item" style="top:73.5px"><svg viewBox="0 0 16 16"><path d="M1.5 1 V15 H15"/><path d="M4.5 12.5 V8.5 M8 12.5 V7 M11.5 12.5 V8.5"/><path d="M3.5 7 L8 3 L12.5 6.5"/></svg><span>Visualize</span></div>
<div class="item on" style="top:101.0px"><svg viewBox="0 0 16 16"><rect x="1.5" y="1.5" width="13" height="3.2" rx="1.2"/><rect x="1.5" y="7" width="13" height="7.5" rx="1.2" stroke="none"/><rect x="1.5" y="7" width="5.3" height="3" rx="1"/><rect x="1.5" y="11.6" width="5.3" height="3" rx="1"/><rect x="9" y="7" width="5.5" height="7.6" rx="1.2"/></svg><span>Dashboard</span></div>
<div class="item" style="top:128.5px"><svg viewBox="0 0 16 16"><path d="M3 1.5 H13 V10 L8 14.5 L3 10 Z"/><path d="M3 3.6 H13" stroke-width="1.6"/><path d="M5.5 6.5 L8 10 L10.5 6.5 M8 10 V12"/></svg><span>Timelion</span></div>
<div class="item" style="top:156.0px"><svg viewBox="0 0 16 16"><rect x="1.5" y="4.5" width="13" height="10" rx="0.5"/><path d="M5.5 4.5 L8 1.5 L10.5 4.5"/><path d="M5 12 V9.5 M7 12 V8 M9 12 V9 M11 12 V7.5"/></svg><span>Canvas</span></div>
<div class="item" style="top:183.5px"><svg viewBox="0 0 16 16"><path d="M8 10.5 C5 7.5 4 6.2 4 4.7 A4 4 0 0 1 12 4.7 C12 6.2 11 7.5 8 10.5 Z"/><circle cx="8" cy="4.7" r="1.4"/><path d="M4.5 9.5 L2 11 L8 14.5 L14 11 L11.5 9.5 M2.5 12.5 L8 15.5 L13.5 12.5" /></svg><span>Maps</span></div>
<div class="item" style="top:211.0px"><svg viewBox="0 0 16 16"><circle cx="8" cy="8" r="6.5" stroke-dasharray="3 2.1" stroke-dashoffset="1.5"/><circle cx="5.8" cy="6.5" r="0.9"/><circle cx="10.2" cy="6.5" r="0.9"/><path d="M5.8 8 V10 M10.2 8 V10"/><circle cx="8" cy="12" r="0.6"/></svg><span>Machine Learning</span></div>
<div class="item" style="top:238.5px"><svg viewBox="0 0 16 16"><path d="M5 10.5 H3.8 A2.8 2.8 0 0 1 3.6 5 A4 4 0 0 1 11.2 4.2 A3 3 0 0 1 13.8 6.5"/><rect x="5.5" y="7.5" width="9" height="7" rx="0.8"/><path d="M5.5 11 H14.5 M7.5 9.2 H8 M7.5 12.8 H8"/></svg><span>Infrastructure</span></div>
<div class="item" style="top:266.0px"><svg viewBox="0 0 16 16"><path d="M4 12 V2 H12.5 A1.5 1.5 0 0 1 14 3.5 V4.5 H12"/><path d="M12 2.5 V13 A1.5 1.5 0 0 1 10.5 14.5 H3 A1.5 1.5 0 0 1 1.5 13 V12 H10"/><path d="M6 5 H10 M6 7 H10 M6 9 H10"/></svg><span>Logs</span></div>
<div class="item" style="top:293.5px"><svg viewBox="0 0 16 16"><rect x="1.5" y="1.5" width="8.5" height="4" rx="0.8"/><rect x="6" y="5.5" width="8.5" height="4" rx="0.8" fill="#005571"/><rect x="9.5" y="9.5" width="5" height="5" rx="0.8"/></svg><span>APM</span></div>
<div class="item" style="top:321.0px"><svg viewBox="0 0 16 16"><path d="M13 7 V9 A5.6 5.6 0 1 1 7.5 3.2" stroke-dasharray="9 1.6 3 1.6 20"/><path d="M5.3 8.8 L7.2 10.6 L10.3 7.2"/><path d="M10.5 4 L13 1.5 L15.5 4 M13 1.8 V7.5"/></svg><span>Uptime</span></div>
<div class="item" style="top:348.5px"><svg viewBox="0 0 16 16"><path d="M5.6 1.6 V5.4 H10.4 V1.6 A4.7 4.7 0 0 1 10 9.9 V14.6 H6 V9.9 A4.7 4.7 0 0 1 5.6 1.6 Z"/></svg><span>Dev Tools</span></div>
<div class="item" style="top:376.0px"><svg viewBox="0 0 16 16"><path d="M8 14 C2 9.5 1.5 7.5 1.5 5.5 A3.3 3.3 0 0 1 8 4.2 A3.3 3.3 0 0 1 14.5 5.5 C14.5 7.5 14 9.5 8 14 Z"/><path d="M1 8.2 H5.5 L6.8 6 L8.2 10.5 L9.6 7 L10.5 8.2 H15" stroke-width="1.1"/></svg><span>Monitoring</span></div>
<div class="item" style="top:403.5px"><svg viewBox="0 0 16 16"><circle cx="8" cy="8" r="1.7"/><path d="M6.6 1.5 H9.4 L9.8 3.3 L11.4 4.2 L13.2 3.6 L14.6 6 L13.2 7.2 V8.8 L14.6 10 L13.2 12.4 L11.4 11.8 L9.8 12.7 L9.4 14.5 H6.6 L6.2 12.7 L4.6 11.8 L2.8 12.4 L1.4 10 L2.8 8.8 V7.2 L1.4 6 L2.8 3.6 L4.6 4.2 L6.2 3.3 Z"/></svg><span>Management</span></div>
<div class="item" style="top:559px"><div id="badge">D</div><span>Default</span></div>
<div class="item" style="top:586.5px"><svg viewBox="0 0 16 16" style="stroke-width:1.45"><path d="M4 8 H12.6 M7.6 4.2 L3.8 8 L7.6 11.8"/></svg><span>Collapse</span></div>
</div>
<div id="sb"><svg class="abs" style="left:0;top:0" width="10" height="12"><path d="M2.6 8 L5 5.4 L7.4 8 Z" fill="#b5b5b5"/></svg><div class="thumb"></div><svg class="abs" style="left:0;top:600px" width="10" height="13"><path d="M2.5 6 L5 8.8 L7.5 6 Z" fill="#404048"/></svg></div>
</body>
</html>
